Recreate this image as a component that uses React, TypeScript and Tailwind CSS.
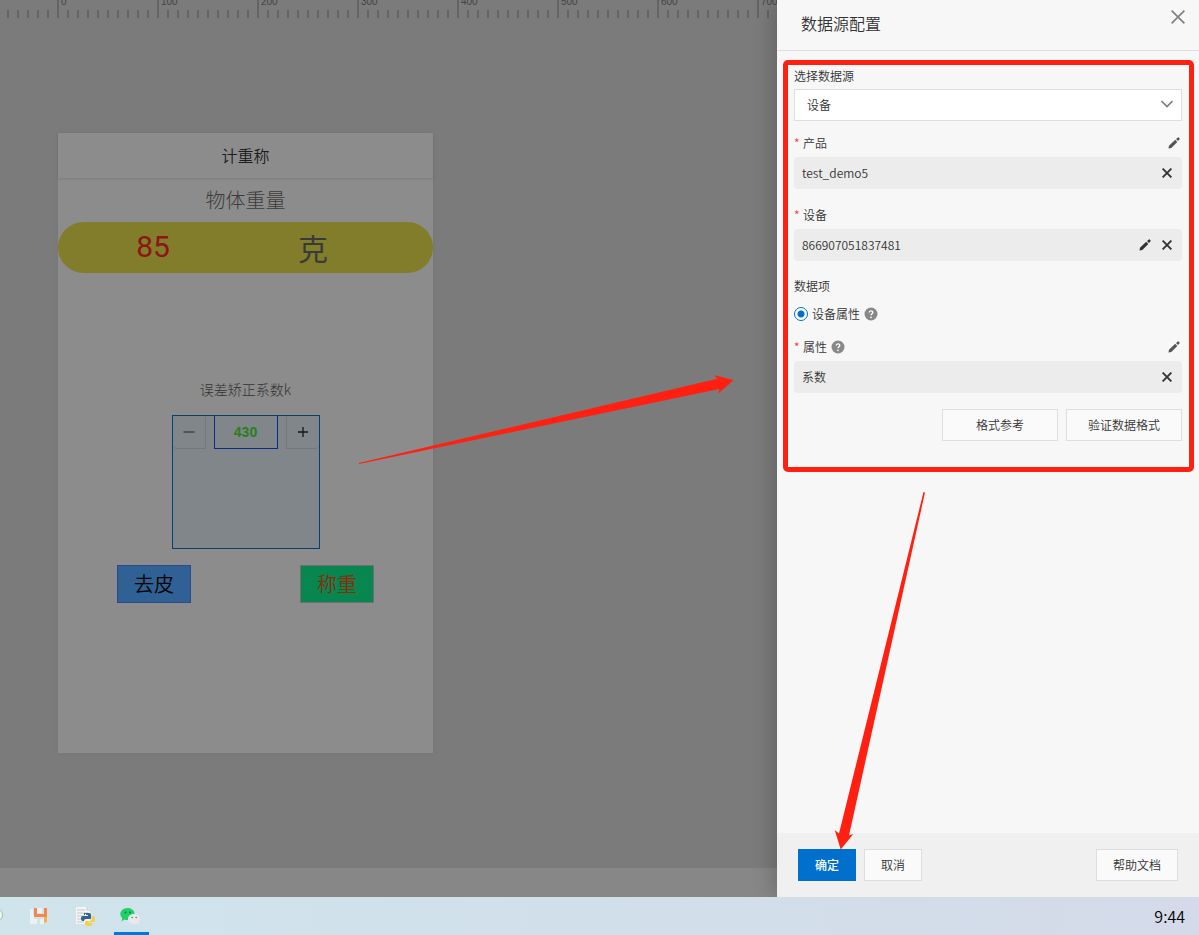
import type { ReactNode } from "react";

const MAJOR_TICKS = [0, 100, 200, 300, 400, 500, 600, 700];
const MINOR_TICKS = Array.from({ length: 200 }, (_, i) => i);

function Ruler() {
  return (
    <svg className="block h-[18px] w-full" aria-label="ruler">
      {MINOR_TICKS.map((i) => (
        <rect key={i} x={7 + i * 10} y={10} width={2} height={8} fill="#646464" />
      ))}
      {MAJOR_TICKS.map((n) => (
        <g key={n}>
          <rect x={57 + n} y={0} width={2} height={18} fill="#646464" />
          <text x={61 + n} y={5} fontSize={10} fill="#444444" fontFamily="Liberation Sans, sans-serif">
            {n}
          </text>
        </g>
      ))}
    </svg>
  );
}

function PencilIcon() {
  return (
    <svg viewBox="0 0 12 12" className="size-3" fill="currentColor" aria-hidden="true">
      <path d="M.5 11.6 1 8.700 7.200 2.800 9.300 4.900 3.300 11z" />
      <path d="M8 2.100 9.900.4Q10.300.1 10.700.5L11.600 1.400Q12 1.800 11.600 2.200L10 4.100z" />
    </svg>
  );
}

function CrossIcon() {
  return (
    <svg viewBox="0 0 10 10" className="size-2.5" fill="none" stroke="currentColor" strokeWidth="1.9" aria-hidden="true">
      <path d="M.6.6 9.400 9.400M9.400.6.6 9.400" />
    </svg>
  );
}

function HelpIcon() {
  return (
    <svg viewBox="0 0 14 14" className="size-3.5" aria-hidden="true">
      <circle cx="7" cy="7" r="6.5" fill="#888888" />
      <path d="M5.200 5.600C5.200 3.200 8.800 3.300 8.800 5.400 8.800 6.700 7 6.800 7 8.300" fill="none" stroke="#fff" strokeWidth="1.3" />
      <circle cx="7" cy="10.3" r=".85" fill="#fff" />
    </svg>
  );
}

function IconButton({ label, children }: { label: string; children: ReactNode }) {
  return (
    <button type="button" aria-label={label} className="flex size-4 items-center justify-center">
      {children}
    </button>
  );
}

type FieldProps = {
  id: string;
  label: string;
  value: string;
  help?: boolean;
  editAbove?: boolean;
  editInside?: boolean;
};

function Field({ id, label, value, help, editAbove, editInside }: FieldProps) {
  return (
    <div>
      <div className="flex h-7 items-center text-[#555555]">
        <label htmlFor={id} className="flex items-center text-[#333333]">
          <span className="w-[9px] text-[#ff3333]">*</span>
          {label}
        </label>
        {help && (
          <span className="ml-1">
            <HelpIcon />
          </span>
        )}
        {editAbove && (
          <span className="ml-auto">
            <IconButton label={"编辑" + label}>
              <PencilIcon />
            </IconButton>
          </span>
        )}
      </div>
      <div className="flex h-8 items-center gap-1.5 rounded-sm bg-[#ececec] pr-[7px] pl-2 text-[#333333]">
        <input id={id} readOnly defaultValue={value} className="min-w-0 flex-1 bg-transparent outline-none" />
        {editInside && (
          <IconButton label={"编辑" + label}>
            <PencilIcon />
          </IconButton>
        )}
        <IconButton label={"清除" + label}>
          <CrossIcon />
        </IconButton>
      </div>
    </div>
  );
}

function PhonePreview() {
  return (
    <section className="flex h-[620px] w-[375px] flex-col bg-[#8c8c8c] shadow-[0_0_6px_rgba(0,0,0,0.05)]">
      <h1 className="flex h-[45px] items-center justify-center pb-0.5 text-base font-[350] text-[#1c1c1c] shadow-[0_1px_2px_rgba(0,0,0,0.12)]">
        计重称
      </h1>
      <h2 className="flex h-11 items-center justify-center text-xl font-light text-[#3c3c3c]">物体重量</h2>
      <div className="flex h-[51px] items-center rounded-full bg-[#827d2a] pb-0.5 text-3xl">
        <span className="w-[190px] text-center font-[Roboto,sans-serif] text-[#8c1515]">85</span>
        <span className="w-[130px] text-center text-[#3a3a3a]">克</span>
      </div>
      <label htmlFor="factor" className="mt-[106px] text-center text-sm leading-5 font-light text-[#333333]">
        误差矫正系数k
      </label>
      <div className="mt-4 flex h-[134px] w-[148px] items-start justify-between self-center border border-[#05406f] bg-[#808689]">
        <button
          type="button"
          aria-label="减少"
          className="flex h-[33px] w-[33px] items-center justify-center rounded-bl-sm border-r border-b border-[#72787b] text-[#3b4043]"
        >
          <svg viewBox="0 0 12 12" className="size-3" stroke="currentColor" strokeWidth="1.4">
            <path d="M.5 6h11" />
          </svg>
        </button>
        <input
          id="factor"
          defaultValue="430"
          className="h-[33px] w-16 border-x border-b border-[#0c2c84] bg-transparent text-center font-['Liberation_Sans',sans-serif] text-sm font-bold text-[#2c7d1c] outline-none"
        />
        <button
          type="button"
          aria-label="增加"
          className="flex h-[33px] w-[33px] items-center justify-center rounded-br-sm border-b border-l border-[#72787b] text-[#14181b]"
        >
          <svg viewBox="0 0 12 12" className="size-3" stroke="currentColor" strokeWidth="1.3">
            <path d="M1 6h10M6 1v10" />
          </svg>
        </button>
      </div>
      <div className="mt-4 flex justify-between px-[59px] font-[350]">
        <button type="button" className="h-[38px] w-[74px] border border-[#2c4a8c] bg-[#2f6194] text-xl text-black">
          去皮
        </button>
        <button type="button" className="h-[38px] w-[74px] border border-[#6f6f6f] bg-[#07864f] text-xl text-[#8c2c0a]">
          称重
        </button>
      </div>
    </section>
  );
}

function ConfigDrawer() {
  const outlined = "h-8 border border-[#dedede] bg-[#fafafa] text-[#333333]";
  return (
    <aside className="flex w-[422px] shrink-0 flex-col bg-[#f7f7f7] text-xs font-[350] text-[#333333] shadow-[-4px_0_20px_rgba(0,0,0,0.2)]">
      <header className="flex h-[51px] justify-between border-b border-[#dedede] pr-3.5 pb-1 pl-6">
        <h2 className="self-center text-base leading-5">数据源配置</h2>
        <button type="button" aria-label="关闭" className="mt-[10px] size-3.5 text-[#808080]">
          <svg viewBox="0 0 14 14" className="size-3.5" fill="none" stroke="currentColor" strokeWidth="1.7">
            <path d="M.6.6 13.400 13.400M13.400.6.6 13.400" />
          </svg>
        </button>
      </header>

      <form className="mt-[9px] mr-[5px] ml-[6px] rounded-[5px] border-5 border-[#ff2012] pr-[7px] pb-[26px] pl-[6px]">
        <label htmlFor="source" className="flex h-6 items-center pb-0.5">
          选择数据源
        </label>
        <div className="relative">
          <select
            id="source"
            defaultValue="device"
            className="h-8 w-full appearance-none border border-[#dedede] bg-white px-3 outline-none"
          >
            <option value="device">设备</option>
          </select>
          <svg
            viewBox="0 0 12 8"
            className="pointer-events-none absolute top-[11px] right-[9px] h-2 w-3"
            fill="none"
            stroke="#808080"
            strokeWidth="1.7"
          >
            <path d="M.5 1 6 6.500 11.500 1" />
          </svg>
        </div>
        <div className="mt-2 flex flex-col gap-3">
          <Field id="product" label="产品" value="test_demo5" editAbove />
          <Field id="device" label="设备" value="866907051837481" editInside />
        </div>
        <fieldset className="mt-[11px]">
          <legend className="flex h-7 items-center">数据项</legend>
          <div className="flex h-7 items-center gap-1">
            <input
              id="attr-radio"
              type="radio"
              name="item"
              defaultChecked
              className="size-3.5 appearance-none rounded-full border border-[#0070cc] bg-[radial-gradient(circle,#0070cc_3px,#ffffff_4px)]"
            />
            <label htmlFor="attr-radio">设备属性</label>
            <HelpIcon />
          </div>
        </fieldset>
        <div className="mt-[5px]">
          <Field id="attr" label="属性" value="系数" help editAbove />
        </div>
        <div className="mt-4 flex justify-end gap-2">
          <button type="button" className={outlined + " w-[116px]"}>
            格式参考
          </button>
          <button type="button" className={outlined + " w-[116px]"}>
            验证数据格式
          </button>
        </div>
      </form>

      <footer className="mt-auto flex h-16 items-center gap-2 bg-[#f0f0f0] px-[21px]">
        <button type="button" className="h-8 w-[58px] bg-[#0070cc] font-medium text-white">
          确定
        </button>
        <button type="button" className={outlined + " w-[58px]"}>
          取消
        </button>
        <button type="button" className={outlined + " ml-auto w-[82px]"}>
          帮助文档
        </button>
      </footer>
    </aside>
  );
}

function Taskbar() {
  return (
    <nav className="flex h-[38px] items-stretch overflow-hidden bg-linear-to-r from-[#d0e4ec] via-[#d1dfea] to-[#d4dae9] pr-3.5">
      <svg viewBox="0 0 3 38" className="h-[38px] w-[3px]" aria-hidden="true">
        <circle cx="-4" cy="18" r="6.5" fill="#eef5f3" stroke="#9fbfae" />
      </svg>
      <button type="button" aria-label="HBuilder" className="ml-[18px] flex w-9 items-center justify-center">
        <svg viewBox="0 0 18 18" className="size-[18px]">
          <path d="M0 2h3v6h1v4h3v5H0zM5 1h7v5H5z" fill="#edf1f5" />
          <path d="M4 1h3v6h7V1h3v9H4z" fill="#f5864c" />
          <path d="M14 10h3v5l-3 1z" fill="#f5b04a" />
          <path d="M10 12h4v5h-4z" fill="#edf1f5" />
        </svg>
      </button>
      <button type="button" aria-label="Python" className="ml-[10px] flex w-9 items-center justify-center">
        <svg viewBox="0 0 20 20" className="size-5">
          <path d="M1 1h11l3 3v14H1z" fill="#f4f4f4" />
          <path d="M2 4h8M2 7h11M2 10h8M2 13h5M2 16h7M12 1v3h3" stroke="#c4c9cd" fill="none" />
          <path d="M9 7h5q2 0 2 2v3q0 1-1 1h-4q-2 0-2 2H8q-2 0-2-2v-1q0-2 2-2h5V9H9z" fill="#32638f" />
          <path d="M17 10h1q2 0 2 2v2q0 2-2 2h-4v1h3v1q0 2-2 2h-3q-2 0-2-2v-2q0-1 1-1h4q2 0 2-2z" fill="#f8cf3e" />
          <circle cx="10.5" cy="8.5" r=".7" fill="#fff" />
        </svg>
      </button>
      <button
        type="button"
        aria-label="微信"
        className="ml-[11px] flex w-[35px] items-center justify-center border-y-3 border-t-transparent border-b-[#0078d7] pr-1"
      >
        <svg viewBox="0 0 20 18" className="h-[18px] w-5">
          <path d="M7.500 1c4 0 7 2.500 7 6s-3 6-7 6q-2 0-3.200-.5L1.700 14.500 2.200 11C-2 7 1.500 1 7.500 1z" fill="#1fd166" />
          <circle cx="5.500" cy="5.500" r="1" fill="#137a3d" />
          <circle cx="10" cy="5.500" r="1" fill="#137a3d" />
          <path d="M14 7c3.500 0 6 2 6 5q0 2-1.500 3.500l.3 2-2-1q-1 .4-2.800.4c-3.500 0-6-2-6-5s2.500-5 6-5z" fill="#e6eaec" />
          <circle cx="12.200" cy="10.500" r=".8" fill="#777" />
          <circle cx="16.200" cy="10.500" r=".8" fill="#777" />
        </svg>
      </button>
      <time className="ml-auto self-center text-base font-[350] text-black">9:44</time>
    </nav>
  );
}

export default function App() {
  return (
    <div className="relative flex min-h-screen flex-col overflow-hidden font-['Noto_Sans_CJK_SC',sans-serif]">
      <main className="flex flex-1">
        <div className="flex min-w-0 flex-1 flex-col bg-[#7b7b7b]">
          <Ruler />
          <div className="flex-1 pt-[115px] pl-[58px]">
            <PhonePreview />
          </div>
          <div className="h-[29px] bg-[#878787]" />
        </div>
        <ConfigDrawer />
      </main>
      <Taskbar />
      <svg
        className="pointer-events-none absolute top-0 left-0"
        width="1199"
        height="935"
        viewBox="0 0 1199 935"
        fill="#ff2012"
        aria-hidden="true"
      >
        <path d="M359 463 717.300 378.700 714 375 733.500 380.300 718.300 393.500 719.300 389 359 464z" />
        <path d="M923.500 492 839 833.500 834.700 830 840.700 849.500 853.300 834 849 835.500 925 492.500z" />
      </svg>
    </div>
  );
}
